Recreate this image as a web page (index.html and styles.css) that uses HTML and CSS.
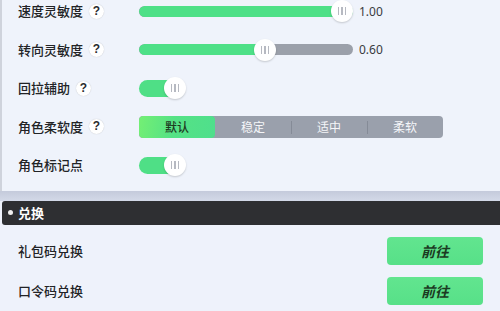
FILE: index.html
```html
<!DOCTYPE html>
<html lang="zh">
<head>
<meta charset="utf-8">
<link rel="stylesheet" href="styles.css">
</head>
<body>
<div class="screen">
  <div class="panel">
    <div class="row first">
      <div class="label"><span>速度灵敏度</span><span class="help">?</span></div>
      <div class="slider">
        <div class="track"><div class="fill" style="width:100%"></div></div>
        <div class="thumb" style="left:192px"><i></i><i></i><i></i></div>
      </div>
      <span class="val">1.00</span>
    </div>
    <div class="row">
      <div class="label"><span>转向灵敏度</span><span class="help">?</span></div>
      <div class="slider">
        <div class="track"><div class="fill" style="width:126px"></div></div>
        <div class="thumb" style="left:115px"><i></i><i></i><i></i></div>
      </div>
      <span class="val">0.60</span>
    </div>
    <div class="row">
      <div class="label"><span>回拉辅助</span><span class="help">?</span></div>
      <div class="toggle"><div class="pill"></div><div class="knob"><i></i><i></i><i></i></div></div>
    </div>
    <div class="row">
      <div class="label"><span>角色柔软度</span><span class="help">?</span></div>
      <div class="segmented">
        <span class="seg active">默认</span>
        <span class="seg">稳定</span>
        <span class="seg">适中</span>
        <span class="seg">柔软</span>
      </div>
    </div>
    <div class="row">
      <div class="label"><span>角色标记点</span></div>
      <div class="toggle"><div class="pill"></div><div class="knob"><i></i><i></i><i></i></div></div>
    </div>
  </div>
  <div class="divider"></div>
  <div class="section-bar"><span class="dot"></span><span>兑换</span></div>
  <div class="list">
    <div class="item"><span class="item-label">礼包码兑换</span><button class="go">前往</button></div>
    <div class="item"><span class="item-label">口令码兑换</span><button class="go">前往</button></div>
  </div>
</div>
</body>
</html>
```

FILE: styles.css
```css
* { box-sizing: border-box; }
html, body {
  margin: 0;
  padding: 0;
  width: 500px;
  height: 311px;
  overflow: hidden;
  background: #eef2fb;
  font-family: "Noto Sans CJK SC", "Noto Sans", sans-serif;
  color: #222326;
}
.screen {
  width: 500px;
  height: 311px;
  overflow: hidden;
  display: flex;
  flex-direction: column;
}
.panel {
  border-left: 2px solid #cfd3dc;
  padding-left: 16px;
  padding-bottom: 6px;
  background: #eff3fb;
}
.row {
  height: 38.5px;
  display: flex;
  align-items: center;
}
.row.first { margin-top: -8px; }
.label {
  width: 121px;
  flex: none;
  display: flex;
  align-items: center;
  gap: 6px;
  font-size: 13px;
  font-weight: 500;
  line-height: 16px;
}
.help {
  width: 15px;
  height: 15px;
  border-radius: 50%;
  background: #ffffff;
  box-shadow: 0 0 1px rgba(0,0,0,0.25);
  font-size: 12px;
  font-weight: 700;
  font-family: "Liberation Sans", sans-serif;
  line-height: 15px;
  text-align: center;
  color: #2a2b2e;
}
.slider {
  position: relative;
  width: 214px;
  height: 22px;
  display: flex;
  align-items: center;
}
.track {
  width: 100%;
  height: 11px;
  border-radius: 6px;
  background: #9ba0aa;
  overflow: hidden;
}
.fill {
  height: 100%;
  background: #4ee087;
  border-radius: 6px 0 0 6px;
}
.thumb, .knob {
  position: absolute;
  top: 0;
  width: 22px;
  height: 22px;
  border-radius: 50%;
  background: #ffffff;
  box-shadow: 0 1px 2px rgba(0,0,0,0.18);
  display: flex;
  justify-content: center;
  align-items: center;
  gap: 2px;
}
.thumb i, .knob i {
  display: block;
  width: 1.5px;
  height: 8px;
  background: #b6b9c1;
}
.val {
  margin-left: 6px;
  font-size: 12px;
  color: #3a3b3f;
  font-family: "Noto Sans", sans-serif;
}
.toggle {
  position: relative;
  width: 47px;
  height: 22px;
  display: flex;
  align-items: center;
}
.pill {
  width: 40px;
  height: 17px;
  border-radius: 9px;
  background: #4fdf86;
}
.knob { left: 25px; }
.segmented {
  display: flex;
  width: 304px;
  height: 22px;
  border-radius: 4px;
  background: #9aa0ac;
  overflow: hidden;
}
.seg {
  flex: 1;
  display: flex;
  align-items: center;
  justify-content: center;
  font-size: 12px;
  color: #f5f6f9;
  position: relative;
}
.seg + .seg::before {
  content: "";
  position: absolute;
  left: 0;
  top: 5px;
  bottom: 4px;
  width: 1px;
  background: #858b97;
}
.seg.active {
  background: linear-gradient(100deg, #74ef74 0%, #55e285 45%, #4fdf8c 100%);
  color: #1e3a1f;
  font-weight: 500;
  border-radius: 4px;
}
.seg.active + .seg::before { display: none; }
.divider {
  height: 10px;
  background: linear-gradient(#c4cadb, #d3d9e8);
}
.section-bar {
  height: 24px;
  background: #2e2f32;
  border-radius: 3px 0 0 3px;
  margin-left: 2px;
  display: flex;
  align-items: center;
  gap: 5px;
  padding-left: 6px;
  color: #ffffff;
  font-size: 13px;
  font-weight: 700;
}
.dot {
  width: 5px;
  height: 5px;
  border-radius: 50%;
  background: #f0f0f0;
}
.list {
  padding-top: 6px;
  padding-left: 18px;
  padding-right: 17px;
}
.item {
  height: 40px;
  display: flex;
  align-items: center;
  justify-content: space-between;
}
.item-label {
  font-size: 13px;
  font-weight: 500;
}
.go {
  width: 96px;
  height: 28px;
  border: none;
  border-radius: 4px;
  background: linear-gradient(#62e58f, #57e088);
  color: #1b3a22;
  font-family: "Noto Sans CJK SC", sans-serif;
  font-size: 14px;
  font-weight: 700;
  font-style: italic;
  padding: 0;
}
```
